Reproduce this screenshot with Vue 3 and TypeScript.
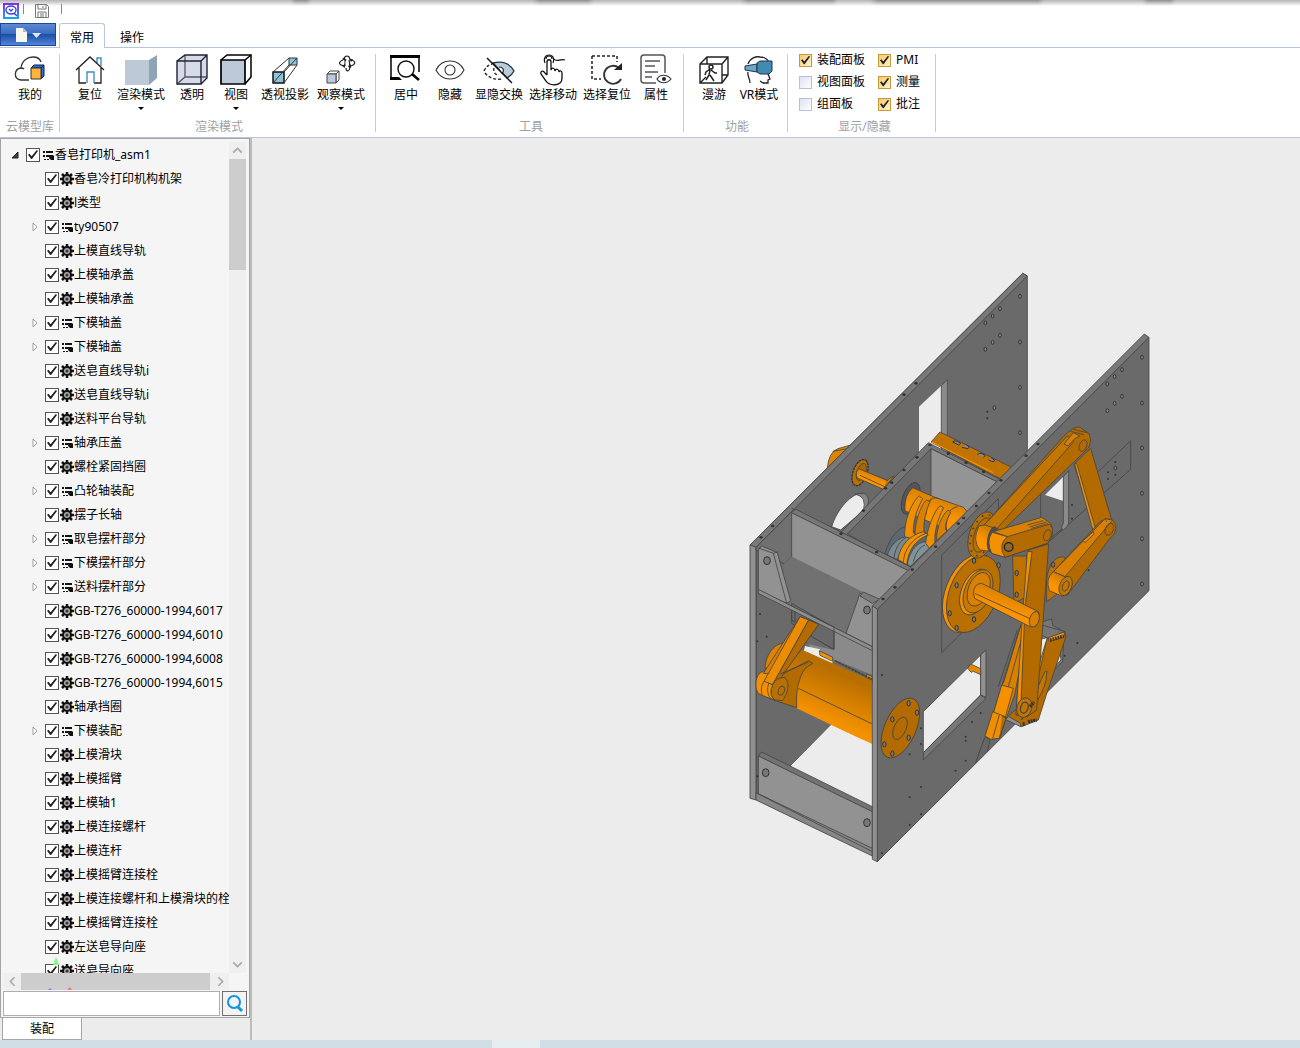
<script setup lang="ts">
import { ref } from 'vue'

interface Shape { d: string; fill?: string; stroke?: string; w?: number; dash?: string }
interface Tool { label: string; size: 'narrow' | 'medium' | 'wide' | 'vr'; menu?: boolean; shapes: Shape[] }
interface Group { caption: string; tools: Tool[] }
interface Node { name: string; branch?: boolean; checked: boolean }

const cubeBack = '#556'
const groups: Group[] = [
  {
    caption: '云模型库',
    tools: [
      { label: '我的', size: 'narrow', shapes: [
        { d: 'M15 26H7C-1 25 0 15 7 14C9 14 10 15 10 15M7 14C8 6 14 3 19 3C23 3 26 5 27 8', stroke: '#333', w: 1.3 },
        { d: 'M17 14L20 11H30L27 14ZM27 14L30 11V22L27 25Z', fill: '#2c6ce0', stroke: '#123' },
        { d: 'M17 14H27V25H17Z', fill: '#ffb43c', stroke: '#333' },
      ] },
    ],
  },
  {
    caption: '渲染模式',
    tools: [
      { label: '复位', size: 'narrow', shapes: [
        { d: 'M23 9V4H27V12', stroke: '#3d8fc6', w: 1.4 },
        { d: 'M2 16L16 3L30 16M5 14V29H12M20 29H27V14', stroke: '#222', w: 1.3 },
        { d: 'M13 29V18H20V29', stroke: '#3d8fc6', w: 1.4 },
      ] },
      { label: '渲染模式', size: 'wide', menu: true, shapes: [
        { d: 'M0 6H24V31H0Z', fill: '#bdc9d7' },
        { d: 'M24 6L32 1V24L24 31Z', fill: '#8fa5b5' },
      ] },
      { label: '透明', size: 'narrow', shapes: [
        { d: 'M1 7L9 1H31V24L25 30H1Z', fill: '#d5dce7' },
        { d: 'M1 30L9 23H31M9 23V1', stroke: cubeBack, w: 1.3 },
        { d: 'M1 7H25V30H1ZM1 7L9 1H31V24L25 30M25 7L31 1', stroke: '#223', w: 1.4 },
      ] },
      { label: '视图', size: 'narrow', menu: true, shapes: [
        { d: 'M1 6L7 1H31V23L25 30', fill: '#fff', stroke: '#000', w: 1.5 },
        { d: 'M1 6H25V30H1Z', fill: '#bdc9d9', stroke: '#000', w: 1.7 },
        { d: 'M25 6L31 1', stroke: '#000', w: 1.5 },
      ] },
      { label: '透视投影', size: 'medium', shapes: [
        { d: 'M20 4H28V11H20Z', fill: '#8cc4dc', stroke: '#333' },
        { d: 'M4 18H15V29H4Z', fill: '#8cc4dc', stroke: '#111', w: 1.5 },
        { d: 'M4 18L20 4M15 18L28 4M15 29L28 11M4 29L20 11', stroke: '#333' },
      ] },
      { label: '观察模式', size: 'wide', menu: true, shapes: [
        { d: 'M2 20L5 17H14L11 20ZM11 20L14 17V26L11 29Z', fill: '#fff', stroke: '#444' },
        { d: 'M2 20H11V29H2Z', fill: '#bcc8dc', stroke: '#444' },
        { d: 'M19 5C20 1 24 1 25 5M21 14C21 17 24 19 25 13M18 6C13 8 13 11 20 12M26 6C31 7 31 10 26 12M21 5C19 8 20 10 20 12M24 6C25 9 25 11 24 13', stroke: '#222', w: 1.2 },
        { d: 'M17 5L20 3V7ZM24 5H28L26 8ZM20 10V14L17 12ZM23 13L26 10V14Z', fill: '#222' },
      ] },
    ],
  },
  {
    caption: '工具',
    tools: [
      { label: '居中', size: 'narrow', shapes: [
        { d: 'M1 3V25M29 3V18', stroke: '#000', w: 1.5 },
        { d: 'M0 1H30V4H0ZM0 23H9L12 26H0Z', fill: '#000' },
        { d: 'M24 15A8 8 0 1 1 8 15A8 8 0 1 1 24 15', stroke: '#111', w: 1.4 },
        { d: 'M22 20L29 26', stroke: '#000', w: 2.6 },
      ] },
      { label: '隐藏', size: 'narrow', shapes: [
        { d: 'M2 16C8 4 24 4 30 16C24 28 8 28 2 16Z', stroke: '#333', w: 1.1 },
        { d: 'M21 16A5 5 0 1 1 11 16A5 5 0 1 1 21 16', stroke: '#333', w: 1.1 },
      ] },
      { label: '显隐交换', size: 'medium', shapes: [
        { d: 'M10 9C18 7 26 8 31 17C29 21 27 22 24 24Z', fill: '#bccbdc', stroke: '#234', w: 1.3 },
        { d: 'M16 13C20 13 22 16 19 20', fill: '#fff', stroke: '#234', w: 1.2 },
        { d: 'M1 17C3 13 5 11 9 10M2 19C6 24 12 26 19 25M11 14C10 18 12 21 16 21', stroke: '#222', w: 1.3, dash: '3 2' },
        { d: 'M4 4L29 29', stroke: '#111', w: 1.5 },
      ] },
      { label: '选择移动', size: 'medium', shapes: [
        { d: 'M10 21V8C10 5 14 5 14 8V16C15 13 18 14 18 17C19 14 22 15 22 18C23 16 25 17 25 19V24C25 33 12 32 9 27L4 20C3 17 6 16 8 19L10 21', fill: '#fff', stroke: '#111', w: 1.3 },
        { d: 'M8 9C6 4 9 1 12 1C16 1 18 5 16 9M17 5C20 9 23 4 28 6', stroke: '#111', w: 1.2 },
        { d: 'M9 5A3 3 0 1 1 15 5', stroke: '#111', w: 1.2 },
      ] },
      { label: '选择复位', size: 'medium', shapes: [
        { d: 'M1 2H26V8M1 2V25H10', stroke: '#222', w: 1.5, dash: '3 2' },
        { d: 'M28 14A9 9 0 1 0 30 25', stroke: '#333', w: 1.8 },
        { d: 'M31 9V16H23Z', fill: '#222' },
      ] },
      { label: '属性', size: 'narrow', shapes: [
        { d: 'M16 29H4Q1 29 1 26V4Q1 1 4 1H22Q25 1 25 4V19', stroke: '#555', w: 1.5 },
        { d: 'M5 7H20M5 12H15M5 18H18M5 23H12', stroke: '#555', w: 1.4 },
        { d: 'M17 25C20 20 27 20 31 25C27 30 20 30 17 25Z', fill: '#fff', stroke: '#333', w: 1.2 },
        { d: 'M26 25A2 2 0 1 1 22 25A2 2 0 1 1 26 25', fill: '#222' },
      ] },
    ],
  },
  {
    caption: '功能',
    tools: [
      { label: '漫游', size: 'narrow', shapes: [
        { d: 'M2 10L9 3H30V21L24 29H2ZM2 10H24V29M24 10L30 3M9 3V10M24 21H30M2 29L8 23', stroke: '#222', w: 1.4 },
        { d: 'M15 13A2 2 0 1 1 11 13A2 2 0 1 1 15 13M12 15L8 18L7 21M13 16L17 19L19 19M12 16L11 21L8 26M12 21L16 27', stroke: '#222', w: 1.5 },
      ] },
      { label: 'VR模式', size: 'vr', shapes: [
        { d: 'M5 10C7 4 13 2 17 3C22 3 25 6 26 9M5 18C4 22 7 24 7 29M25 20L27 25L25 26V29L20 29L17 27', stroke: '#222', w: 1.3 },
        { d: 'M2 12L14 10V18L2 16Z', fill: '#6aa7c8', stroke: '#234' },
        { d: 'M14 9L17 7H29V17L26 20H17L14 18Z', fill: '#418bb3', stroke: '#234' },
      ] },
    ],
  },
]

const toggles = ref([
  { label: '装配面板', on: true }, { label: 'PMI', on: true },
  { label: '视图面板', on: false }, { label: '测量', on: true },
  { label: '组面板', on: false }, { label: '批注', on: true },
])

const branches = new Set([2, 6, 7, 11, 13, 15, 16, 17, 23])
const names = [
  '香皂冷打印机构机架', 'l类型', 'ty90507', '上模直线导轨', '上模轴承盖', '上模轴承盖', '下模轴盖', '下模轴盖',
  '送皂直线导轨i', '送皂直线导轨i', '送料平台导轨', '轴承压盖', '螺栓紧固挡圈', '凸轮轴装配', '摆子长轴',
  '取皂摆杆部分', '下模摆杆部分', '送料摆杆部分', 'GB-T276_60000-1994,6017', 'GB-T276_60000-1994,6010',
  'GB-T276_60000-1994,6008', 'GB-T276_60000-1994,6015', '轴承挡圈', '下模装配', '上模滑块', '上模摇臂',
  '上模轴1', '上模连接螺杆', '上模连杆', '上模摇臂连接栓', '上模连接螺杆和上模滑块的栓', '上模摇臂连接栓',
  '左送皂导向座', '送皂导向座',
]
const rootNode = ref<Node>({ name: '香皂打印机_asm1', branch: true, checked: true })
const nodes = ref<Node[]>(names.map((name, i) => ({ name, branch: branches.has(i), checked: true })))
const query = ref('')

// Bolt holes on the plates: x, y in drawing units.
const plateHoles = [
  [840, 109], [780, 146], [758, 168], [736, 189], [780, 226], [758, 247], [736, 268], [840, 246], [840, 382], [840, 518], [763, 443],
  [1206, 292], [1146, 329], [1124, 350], [1102, 372], [1146, 409], [1124, 430], [1102, 452], [1206, 429], [1206, 564], [1206, 700],
  [1206, 836], [1206, 972], [1126, 624],
]
const smallHoles = [
  [742, 455], [742, 475], [1104, 637], [1104, 657], [1126, 606], [1126, 644], [996, 735], [996, 776], [1046, 931], [1012, 1149], [974, 1187],
  [722, 1359], [696, 1386], [677, 1430], [677, 1442], [677, 1502], [647, 1532], [543, 1405], [543, 1452], [509, 1483], [543, 1581],
  [509, 1612], [543, 1663], [509, 1694], [426, 1780], [426, 1245], [60, 1062], [80, 1130], [52, 1144], [52, 1549],
]
const edgeHoles = [
  [528, 370], [492, 404], [98, 798], [63, 832], [894, 552], [858, 587], [783, 661], [747, 699], [709, 738], [671, 774],
  [655, 791], [587, 860], [517, 929], [465, 982], [429, 1017], [570, 555], [531, 592], [492, 630], [455, 668], [437, 685],
  [370, 752], [303, 821], [410, 876], [625, 581], [678, 608], [731, 635],
]
const bolts = [
  [506, 1330], [531, 1358], [457, 1378], [433, 1453], [506, 1433], [457, 1481], [702, 902], [776, 916], [650, 976],
  [629, 1060], [650, 1104], [702, 1078], [830, 939], [830, 1004], [939, 914],
]
</script>

<template>
  <div class="app">
    <header class="titlebar">
      <svg class="logo" viewBox="0 0 16 16" aria-hidden="true">
        <defs>
          <linearGradient id="logo-edge" x1="0" y1="0" x2="0" y2="1">
            <stop offset="0" stop-color="#8a2be8" /><stop offset="1" stop-color="#12a5ff" />
          </linearGradient>
        </defs>
        <rect x="1" y="1" width="14" height="14" fill="#fff" stroke="url(#logo-edge)" stroke-width="2" />
        <path d="M3 7A5 4 0 0 1 13 7A5 4 0 0 1 3 7M11 10L14 13M6 6L8 8L10 6" fill="none" stroke="#3346e0" stroke-width="1.4" />
      </svg>
      <span class="tick"></span>
      <button class="save" aria-label="保存">
        <svg viewBox="0 0 14 14"><path d="M.5 .5H11.500L13.500 2.500V13.500H.5ZM3 .5V5H11V.5M3 13V8H11V13M5 10H9M5 12H9M8 2V4" fill="none" stroke="#777" /></svg>
      </button>
      <span class="tick"></span>
    </header>

    <nav class="tabs">
      <button class="file" aria-label="文件">
        <svg viewBox="0 0 28 14"><path d="M2 0H9L13 4V14H2Z" fill="#f6f6f2" /><path d="M9 0V4H13" fill="#bbb" /><path d="M18 5H27L22.500 10Z" fill="#dbe8ff" /></svg>
      </button>
      <button class="tab active">常用</button>
      <button class="tab">操作</button>
    </nav>

    <section class="ribbon">
      <div v-for="g in groups" :key="g.caption" class="group">
        <div class="tools">
          <button v-for="t in g.tools" :key="t.label" class="tool" :class="t.size">
            <svg class="icon" viewBox="0 0 32 32">
              <path v-for="(s, i) in t.shapes" :key="i" :d="s.d" :fill="s.fill ?? 'none'" :stroke="s.stroke ?? 'none'" :stroke-width="s.w ?? 1" :stroke-dasharray="s.dash" />
            </svg>
            <span>{{ t.label }}</span>
            <i v-if="t.menu" class="caret"></i>
          </button>
        </div>
        <div class="caption">{{ g.caption }}</div>
      </div>
      <div class="group show">
        <div class="toggles">
          <label v-for="t in toggles" :key="t.label"><input v-model="t.on" type="checkbox" />{{ t.label }}</label>
        </div>
        <div class="caption">显示/隐藏</div>
      </div>
    </section>

    <main class="work">
      <aside class="dock">
        <div class="panel">
          <div class="browser">
            <ul class="tree">
              <li class="row root">
                <svg class="arrow" viewBox="0 0 8 8"><path d="M7 1V7H1Z" fill="#404040" stroke="#222" /></svg>
                <label><input v-model="rootNode.checked" type="checkbox" />
                  <svg class="list" viewBox="0 0 12 12"><path d="M0 1H2V3H0ZM3 1H10V3H3ZM0 5H2V7H0ZM3 5H7V7H3ZM1 9H3V10H1ZM4 9H6V10H4ZM7 5H10L11 6V10H8L6 8Z" fill="#111" /></svg>{{ rootNode.name }}</label>
              </li>
              <li v-for="(n, i) in nodes" :key="i" class="row">
                <svg class="arrow" viewBox="0 0 8 8"><path v-if="n.branch" d="M2 0L6 4L2 8Z" fill="#fff" stroke="#a0a0a0" /></svg>
                <label><input v-model="n.checked" type="checkbox" />
                  <svg v-if="n.branch" class="list" viewBox="0 0 12 12"><path d="M0 1H2V3H0ZM3 1H10V3H3ZM0 5H2V7H0ZM3 5H7V7H3ZM1 9H3V10H1ZM4 9H6V10H4ZM7 5H10L11 6V10H8L6 8Z" fill="#111" /></svg>
                  <svg v-else class="gear" viewBox="0 0 14 14">
                    <path d="M7 0V14M0 7H14M2 2L12 12M12 2L2 12" stroke="#111" stroke-width="2.500" />
                    <circle cx="7" cy="7" r="4" fill="#aaa" stroke="#111" stroke-width="2" /><circle cx="7" cy="7" r="1.500" fill="#333" />
                  </svg>{{ n.name }}</label>
              </li>
            </ul>
            <div class="vbar">
              <svg viewBox="0 0 16 16"><path d="M4 10L8 6L12 10" /></svg>
              <div class="vthumb"></div>
              <svg viewBox="0 0 16 16"><path d="M4 6L8 10L12 6" /></svg>
            </div>
            <div class="hbar">
              <svg viewBox="0 0 16 16"><path d="M10 4L6 8L10 12" /></svg>
              <div class="hthumb"></div>
              <svg viewBox="0 0 16 16"><path d="M6 4L10 8L6 12" /></svg>
            </div>
            <svg class="triad" viewBox="0 0 30 36" aria-hidden="true">
              <path d="M9 8L12 0L15 8Z" fill="#7dfa7d" /><path d="M4 33L6 31L8 33Z" fill="#8080ff" /><path d="M23 33L26 30L28 33Z" fill="#ff7878" />
            </svg>
          </div>
          <form class="search" @submit.prevent>
            <input v-model="query" type="text" aria-label="搜索" />
            <button aria-label="查找"><svg viewBox="0 0 18 18"><circle cx="8" cy="7" r="6" fill="none" stroke="#1296db" stroke-width="2" /><path d="M12 12L16 16" stroke="#1296db" stroke-width="3" /></svg></button>
          </form>
        </div>
        <div class="docktabs"><button>装配</button></div>
      </aside>

      <div class="viewport">
        <svg class="model" viewBox="252 138 1048 902" role="img" aria-label="香皂打印机">
          <defs>
            <linearGradient id="drum" x1="0" y1="0" x2="-0.4" y2="1">
              <stop offset="0" stop-color="#b96f00" /><stop offset=".45" stop-color="#f39100" /><stop offset="1" stop-color="#ff9800" />
            </linearGradient>
            <linearGradient id="rod" x1="0" y1="1" x2=".5" y2="0">
              <stop offset="0" stop-color="#ff9800" /><stop offset=".5" stop-color="#fb9400" /><stop offset="1" stop-color="#c87800" />
            </linearGradient>
          </defs>
          <g transform="translate(740 260) scale(.33333)" stroke="#454545" stroke-width="2.500" stroke-linejoin="round">
            <!-- rear side plate -->
            <path d="M262 625Q266 576 294 566L332 555L340 590L270 650Z" fill="#df8400" />
            <path d="M278 574L322 566" />
            <path d="M30 855L848 40L862 48V806L48 1620V862Z" fill="#6a6a6a" />
            <path d="M30 855L848 40L862 48L48 862Z" fill="#787878" />
            <path d="M30 855L48 862V1620L30 1615Z" fill="#909090" />
            <path d="M537 440L622 360V580H537Z" fill="#ececec" stroke="none" />
            <path d="M604 377L622 360V580H604Z" fill="#8b8b8b" />
            <path d="M275 800C290 750 335 695 372 700C390 712 386 735 370 752L302 810Z" fill="#ececec" />
            <path d="M345 702Q382 710 370 752C390 735 390 706 372 700Z" fill="#858585" />
            <!-- short shaft and flange -->
            <ellipse cx="360" cy="638" rx="21" ry="41" transform="rotate(20 360 638)" fill="#b87000" stroke="#333" stroke-width="4" stroke-dasharray="8 2" />
            <ellipse cx="364" cy="636" rx="13" ry="27" transform="rotate(20 364 636)" fill="#a96500" />
            <path d="M356 626L444 662L430 688L352 654Q344 638 356 626Z" fill="url(#rod)" />
            <path d="M360 646L434 680M440 664Q450 650 462 648L430 688" fill="#c87800" />
            <!-- middle compartment -->
            <g transform="translate(240 480)">
              <path d="M333 66L360 36L575 142L545 178L520 166Z" fill="#c17300" />
              <path d="M335 66L520 158" fill="none" stroke="#ff9800" stroke-width="3" />
              <path d="M398 66Q404 60 412 64L422 70L416 75ZM426 82L444 86L448 80L438 74M472 104Q478 98 486 101L496 107L490 112M506 120L520 126L524 120L514 114" fill="#8a8a8a" stroke="#333" stroke-width="3" />
              <path d="M60 340L325 68L543 180L270 450Z" fill="#767676" />
              <path d="M82 342L333 86L530 185L265 445Z" fill="#696969" />
              <path d="M333 86L530 185L435 285L333 230Z" fill="#949494" />
              <!-- camshaft -->
              <ellipse cx="272" cy="235" rx="24" ry="50" transform="rotate(20 272 235)" fill="#555" stroke="#333" stroke-dasharray="5 2" />
              <path d="M278 203L345 232L430 262L442 275L385 332L255 272Q252 225 278 203Z" fill="url(#rod)" />
              <path d="M325 245Q335 228 358 236M318 285Q318 252 335 238M384 285Q390 265 412 260M380 332Q375 300 390 280" fill="none" />
              <path d="M195 400C210 350 235 325 255 320L345 362L265 440Z" fill="#5b6a70" />
              <path d="M202 405C215 365 245 345 275 350L240 410L228 418Z" fill="#78898f" />
              <path d="M262 432C270 385 300 360 328 365L335 378L270 440Z" fill="#819399" />
              <path d="M222 414C225 380 245 358 262 350M280 425C288 395 300 380 315 375" fill="none" />
              <path d="M254 335C256 290 280 240 298 228L308 236C290 270 280 300 280 338L294 345L288 360L254 350Z" fill="#ee8e00" />
              <path d="M285 345C285 300 305 250 320 240L330 245C315 280 310 310 312 338L290 360Z" fill="#d98000" />
              <path d="M317 370C322 320 345 270 360 257L371 263C352 300 342 340 345 368L328 384Z" fill="#ee8e00" />
              <path d="M350 362C348 320 370 280 384 270L392 276C375 310 372 330 382 332Z" fill="#d98000" />
              <path d="M234 418C240 375 270 345 310 335L325 345C285 360 265 390 260 435Z" fill="#f39100" />
              <path d="M250 427C252 390 275 355 318 340" fill="none" />
            </g>
            <!-- front box -->
            <path d="M48 862L153 757L168 752L520 925L412 1045L395 1038L48 870Z" fill="#707070" />
            <path d="M155 760L505 932L415 1020L155 890Z" fill="#929292" stroke="none" />
            <path d="M155 760V890L130 915M155 745L520 925" fill="none" />
            <path d="M153 757L168 748L520 925L505 932Z" fill="#777" />
            <g transform="translate(0 840)">
              <path d="M155 50L410 176L360 162L318 280L140 190L128 75Z" fill="#717171" stroke="none" />
              <path d="M155 190V250L282 330V262Z" fill="#696969" />
              <path d="M205 312L280 330V262L397 320V405L280 358L215 330Z" fill="#8a8a8a" stroke="none" />
              <path d="M212 225L282 262V328L215 290Z" fill="#686868" />
              <path d="M55 30L65 18L112 38L152 182L140 190L55 152Z" fill="#929292" />
              <path d="M55 24L100 40L140 190M100 40L112 36" fill="none" />
              <path d="M360 160L412 182L397 320L318 280Z" fill="#929292" />
              <path d="M360 168L370 156L420 178L397 190Z" fill="#7b7b7b" />
              <path d="M55 148L397 320V332L55 160Z" fill="#8e8e8e" />
              <path d="M155 210V240L165 246V215M282 262V328" fill="none" />
              <!-- drum and crank -->
              <path d="M195 318L240 328V345L280 360L275 375L190 340Z" fill="#ececec" stroke="none" />
              <path d="M238 332L278 352V364L240 346ZM380 402L397 410V420L380 414Z" fill="#f29100" />
              <path d="M285 362L380 410L397 418" stroke="#444" stroke-width="5" fill="none" stroke-dasharray="9 2" />
              <path d="M75 385C78 335 110 310 130 310L150 380Z" fill="#df8400" />
              <path d="M188 330L397 422V614L170 505L120 470L120 390Z" fill="url(#drum)" stroke="none" />
              <path d="M175 445L397 552" fill="none" />
              <path d="M105 415L205 362L218 370L195 385Q165 430 170 503L100 480Z" fill="#b36b00" />
              <path d="M72 393Q45 400 48 440Q50 460 62 464L100 480L130 420Z" fill="#f39100" />
              <path d="M180 230L236 253L125 405L70 400Z" fill="#d98000" />
              <path d="M180 230L206 240L98 434L72 424Z" fill="#ec8c00" />
              <path d="M206 240L236 253L125 410L98 434Z" fill="#b36b00" />
              <path d="M98 434Q108 412 135 412Q150 430 140 460L128 482L105 480Q84 466 98 434Z" fill="#b87000" />
              <path d="M98 434Q84 466 105 480L90 474Q78 455 86 430Z" fill="#f39100" />
              <ellipse cx="124" cy="452" rx="9" ry="14" transform="rotate(18 124 452)" fill="none" />
              <path d="M72 424Q60 440 66 465M120 402L206 366" fill="none" />
              <!-- lower opening -->
              <path d="M272 556L152 678L397 800V612Z" fill="#ececec" stroke="none" />
              <path d="M55 648L65 636L397 800V820Z" fill="#737373" />
              <path d="M55 648L397 815V935L55 765Z" fill="#929292" />
              <path d="M48 758L397 925V948L48 780Z" fill="#868686" />
              <path d="M55 762L397 935" fill="none" />
            </g>
            <g fill="#777" stroke="#333" stroke-width="3">
              <ellipse cx="81" cy="902" rx="10" ry="12" /><ellipse cx="381" cy="1050" rx="10" ry="12" />
              <ellipse cx="77" cy="1538" rx="10" ry="12" /><ellipse cx="381" cy="1688" rx="10" ry="12" />
            </g>
            <!-- front side plate -->
            <path d="M412 1045L1227 232V992L412 1805Z" fill="#6a6a6a" />
            <path d="M397 1038L1213 222L1227 232L412 1048Z" fill="#787878" />
            <path d="M397 1038L412 1047V1805L397 1798Z" fill="#909090" />
            <path d="M550 1355L722 1185V1305L550 1478Z" fill="#ececec" />
            <path d="M722 1185L738 1170V1312L722 1305Z" fill="#919191" />
            <path d="M550 1478L722 1305L738 1315L550 1500Z" fill="#777" />
            <path d="M683 1225L692 1212L722 1226V1244L700 1234L694 1237Z" fill="#e58900" />
            <path d="M605 1178V885L775 716V870M605 1178L720 1065M820 940L1172 628V542L1075 635M902 700V770M902 860L980 795" fill="none" />
            <path d="M915 705L970 650V723Z" fill="#ececec" stroke="none" />
            <path d="M970 650L986 632V790Q984 802 967 812L965 800L970 790Z" fill="#8a8a8a" />
            <path d="M706 1510L735 1430L750 1440L742 1474" fill="#666" />
            <path d="M898 1088L935 1077L938 1096L972 1115L968 1205L912 1260Z" fill="#777" />
            <path d="M896 1140L955 1130L963 1200L920 1246L885 1225Z" fill="#ececec" />
            <!-- large bearing flange -->
            <ellipse cx="690" cy="1000" rx="74" ry="124" transform="rotate(22 690 1000)" fill="#f39100" />
            <ellipse cx="700" cy="1002" rx="72" ry="121" transform="rotate(22 700 1002)" fill="#ba7000" />
            <ellipse cx="706" cy="996" rx="42" ry="72" transform="rotate(22 706 996)" fill="#f39100" />
            <ellipse cx="714" cy="994" rx="40" ry="68" transform="rotate(22 714 994)" fill="#c87800" />
            <ellipse cx="716" cy="988" rx="31" ry="53" transform="rotate(22 716 988)" fill="#d98000" />
            <!-- upper linkage -->
            <g transform="translate(570 480)">
              <ellipse cx="156" cy="345" rx="38" ry="72" transform="rotate(18 156 345)" fill="#b87000" />
              <ellipse cx="156" cy="345" rx="31" ry="64" transform="rotate(18 156 345)" fill="none" stroke="#3c3c3c" stroke-width="5" stroke-dasharray="5 18" />
              <ellipse cx="158" cy="345" rx="25" ry="54" transform="rotate(18 158 345)" fill="none" />
              <path d="M248 408H290V530L252 550Z" fill="#bd7200" />
              <path d="M350 480C355 430 380 405 405 412L410 500L350 545Z" fill="#bd7200" />
              <path d="M432 132L492 325L510 335L545 300L482 85Z" fill="#b36b00" />
              <path d="M434 132L440 130L496 325L490 335Z" fill="#f39100" />
              <path d="M160 318L400 50Q435 15 450 22L478 42Q486 65 475 84L225 325L190 340Z" fill="#b36b00" />
              <path d="M160 318L412 48L432 64L190 338Z" fill="#c57600" />
              <path d="M402 72L430 38L450 48L434 56L414 78ZM422 34L462 44M430 28L472 38" fill="#d98000" />
              <path d="M147 318L165 315L212 330L190 395L150 390Q125 360 147 318Z" fill="url(#rod)" />
              <ellipse cx="188" cy="358" rx="15" ry="38" transform="rotate(10 188 358)" fill="#4d4d4d" />
              <path d="M190 335L335 292L362 310Q378 340 352 370L225 412L185 400Q168 365 190 335Z" fill="#d98000" />
              <path d="M190 335L232 350L360 312Q380 340 352 370L225 412Q198 395 225 350" fill="#b36b00" />
              <path d="M186 337L232 350Q202 375 225 412L185 400Q168 365 186 337Z" fill="#f39100" />
              <path d="M292 315L340 302M298 321L350 306M304 325L355 310" fill="none" />
              <circle cx="236" cy="381" r="13" fill="#8e6430" stroke="#222" stroke-width="4" />
              <ellipse cx="352" cy="346" rx="11" ry="17" transform="rotate(20 352 346)" fill="none" />
              <ellipse cx="459" cy="77" rx="11" ry="18" transform="rotate(22 459 77)" fill="none" />
              <path d="M370 455L510 305Q545 285 558 315Q560 340 540 355L410 528L370 500Z" fill="#b36b00" />
              <path d="M370 455L525 296L548 300L405 470Z" fill="#d98000" />
              <path d="M460 362L490 335L492 342L465 368ZM525 296L530 305" fill="#f39100" />
              <ellipse cx="538" cy="328" rx="12" ry="19" transform="rotate(22 538 328)" fill="none" />
              <path d="M370 455L415 475L400 530L358 512Q345 475 370 455Z" fill="url(#rod)" />
              <ellipse cx="407" cy="498" rx="18" ry="30" transform="rotate(22 407 498)" fill="#c27500" />
              <ellipse cx="407" cy="498" rx="9" ry="16" transform="rotate(22 407 498)" fill="none" />
            </g>
            <!-- lower linkage -->
            <g transform="translate(570 930)">
              <path d="M272 165L295 158L255 370L210 500L165 498L190 430Z" fill="#d98000" />
              <path d="M272 168L220 340M282 180L235 350M262 180L205 350" fill="none" />
              <path d="M190 430L215 345L250 355L225 445Z" fill="#f39100" />
              <path d="M188 425L226 440L208 505L182 508L165 498Z" fill="#ee8e00" />
              <path d="M208 435L188 506M216 438L228 444L208 506" fill="#b36b00" />
              <path d="M345 205L405 185L408 200L352 365L325 450L275 470L228 445L300 380Z" fill="#b36b00" />
              <path d="M352 202L275 450L330 300ZM354 200L405 185L402 200L358 215Z" fill="#f39100" />
              <path d="M360 210L402 198" stroke="#333" stroke-width="10" stroke-dasharray="5 3" />
              <path d="M328 210L350 205L312 325Z" fill="#ececec" stroke="none" />
              <path d="M328 192L340 166L405 185L352 204Z" fill="#767676" />
              <path d="M350 310Q354 300 344 306L320 360Q315 400 298 410L322 392Q350 345 350 310" fill="#c57600" />
              <path d="M296 -60L356 -78L320 420L292 440L258 435L278 160L288 80Z" fill="#b36b00" />
              <path d="M292 -55L306 -55L285 110L272 425L258 435L276 160Z" fill="#f39100" />
              <ellipse cx="283" cy="413" rx="22" ry="30" transform="rotate(18 283 413)" fill="#c27500" />
              <ellipse cx="283" cy="413" rx="11" ry="17" transform="rotate(18 283 413)" fill="none" stroke-width="4" />
              <path d="M226 448L236 440L272 460V470Z" fill="#909090" />
              <path d="M278 462H284M294 455L320 450M300 410L312 396" stroke="#333" stroke-width="10" stroke-dasharray="6 2" />
              <!-- drive rod -->
              <path d="M130 70Q132 40 155 40L325 125Q332 145 318 168L300 170L134 85Z" fill="url(#rod)" />
              <path d="M134 70L300 146" fill="none" />
              <ellipse cx="313" cy="148" rx="14" ry="24" transform="rotate(18 313 148)" fill="#d98000" />
            </g>
            <!-- small bearing cap -->
            <ellipse cx="481" cy="1404" rx="47" ry="96" transform="rotate(24 481 1404)" fill="#b36b00" />
            <ellipse cx="480" cy="1405" rx="18" ry="36" transform="rotate(24 480 1405)" fill="none" />
            <g fill="#777" stroke="#333" stroke-width="3">
              <ellipse v-for="([x, y], i) in bolts" :key="i" :cx="x" :cy="y" rx="5" ry="8" />
            </g>
            <g fill="#888" stroke="#333" stroke-width="3">
              <ellipse v-for="([x, y], i) in plateHoles" :key="i" :cx="x" :cy="y" rx="4" ry="6" />
            </g>
            <g fill="#333" stroke="none">
              <circle v-for="([x, y], i) in smallHoles" :key="i" :cx="x" :cy="y" r="3" />
              <ellipse v-for="([x, y], i) in edgeHoles" :key="i" :cx="x" :cy="y" rx="5" ry="4" />
            </g>
          </g>
        </svg>
      </div>
    </main>
    <footer class="strip"><span></span></footer>
  </div>
</template>

<style>
body { margin: 0; overflow: hidden; }
</style>

<style scoped>
* { box-sizing: border-box; }
.app {
  height: 100vh;
  display: flex;
  flex-direction: column;
  background: #fff;
  color: #000;
  font: 12px/16px "Noto Sans", "Noto Sans CJK SC", sans-serif;
}
button { font: inherit; color: inherit; border: 0; background: none; padding: 0; }
.titlebar {
  height: 22px;
  flex: none;
  display: flex;
  align-items: flex-start;
  padding: 3px 3px 0;
  background:
    linear-gradient(#0000, #fff 6px),
    linear-gradient(90deg, #b4b4b4 290px, #8c8c8c 296px 306px, #b4b4b4 312px 532px, #8c8c8c 540px 588px, #b4b4b4 594px 740px, #8c8c8c 748px 832px, #b4b4b4 838px 870px, #8c8c8c 878px 1038px, #b4b4b4 1044px 1142px, #8c8c8c 1148px 1170px, #b4b4b4 1176px);
}
.logo { width: 16px; height: 16px; }
.tick { width: 1px; height: 10px; background: #888; margin: 1px 11px 0 4px; }
.save { width: 14px; height: 14px; margin-top: 1px; }
.save svg { display: block; width: 14px; height: 14px; }
.save + .tick { margin-left: 12px; }
.tabs { height: 25px; flex: none; display: flex; align-items: flex-end; }
.file {
  width: 56px;
  height: 23px;
  margin: 0 3px 1px 0;
  border: 1px solid #1c479b;
  background: linear-gradient(#5d8ad2, #3b6dc0 45%, #1c4fa8 50%, #4f86d6);
}
.file svg { width: 28px; height: 14px; display: block; margin: 0 auto; }
.tab { height: 24px; padding: 4px 10px 0; border: 1px solid transparent; border-bottom: 0; }
.tab.active {
  height: 25px;
  margin: 0 4px -1px 0;
  border-color: #b9c5da;
  border-radius: 3px 3px 0 0;
  background: #fff;
  position: relative;
  z-index: 1;
}
.ribbon {
  height: 91px;
  flex: none;
  display: flex;
  border-top: 1px solid #b9c5da;
  border-bottom: 1px solid #b9c5da;
  padding: 6px 0;
}
.group {
  min-width: 60px;
  height: 78px;
  display: flex;
  flex-direction: column;
  justify-content: space-between;
  align-items: center;
  padding: 0 5px 0 8px;
  border-right: 1px solid #c3cddd;
}
.group:first-child { padding-left: 6px; }
.tools { display: flex; align-items: flex-start; }
.tool { display: flex; flex-direction: column; align-items: center; white-space: nowrap; }
.tool.narrow { width: 44px; }
.tool.medium { width: 54px; }
.tool.wide { width: 58px; }
.tool.vr { width: 46px; }
.icon { width: 32px; height: 32px; margin-bottom: 1px; }
.caret { border: 3px solid transparent; border-top-color: #000; border-bottom: 0; margin-top: 4px; }
.caption { color: #a0a0a0; line-height: 16px; margin-bottom: -3px; white-space: nowrap; }
.show { width: 148px; padding: 0 5px 0 11px; }
.toggles { align-self: stretch; display: grid; grid-template-columns: 79px auto; margin-top: -5px; }
.toggles label { display: flex; align-items: center; gap: 5px; height: 22px; }
.toggles input, .row input {
  appearance: none;
  position: relative;
  flex: none;
  width: 13px;
  height: 13px;
  margin: 0;
  border: 1px solid #b5bfe0;
  background: linear-gradient(135deg, #dfe2ef, #fff);
}
.toggles input:checked { border-color: #c29b3a; background: linear-gradient(135deg, #fbc868, #fff2d0); }
.toggles input:checked::after, .row input:checked::after {
  content: "";
  position: absolute;
  inset: 1px;
  background: #222;
  clip-path: polygon(0 52%, 15% 42%, 36% 68%, 88% 4%, 100% 14%, 40% 96%, 32% 96%);
}
.work { flex: 1; min-height: 0; display: flex; background: #ececec; }
.dock { width: 252px; flex: none; display: flex; flex-direction: column; border-right: 2px solid #bcbcbc; }
.panel {
  flex: 1;
  min-height: 0;
  display: flex;
  flex-direction: column;
  border: 1px solid #a5a5a5;
  background: #f5f5f5;
  padding: 3px 2px 1px;
}
.browser {
  position: relative;
  flex: 1;
  min-height: 0;
  display: grid;
  grid-template: minmax(0, 1fr) 17px / 226px 17px;
  margin-bottom: 1px;
}
.tree { list-style: none; margin: 0; padding: 1px 0 0; overflow: hidden; }
.row { height: 24px; display: flex; align-items: center; padding-left: 28px; white-space: nowrap; }
.row.root { padding-left: 8px; }
.row label { display: flex; align-items: center; }
.arrow { width: 8px; height: 8px; margin-right: 6px; flex: none; }
.root .arrow { margin-right: 7px; }
.row input { width: 14px; height: 14px; border-color: #555; background: #fff; margin: 0 1px 1px 0; }
.gear { width: 14px; height: 14px; flex: none; }
.list { width: 12px; height: 12px; margin: 2px 0 0 2px; flex: none; }
.vbar, .hbar { display: flex; background: #efefef; }
.vbar { flex-direction: column; }
.hbar { padding-left: 1px; }
.vbar svg, .hbar svg { width: 17px; height: 17px; flex: none; fill: none; stroke: #aaa; stroke-width: 1.6; }
.vthumb { height: 111px; margin-bottom: auto; background: #cdcdcd; }
.hthumb { flex: 1; background: #cdcdcd; margin-right: 2px; }
.triad { position: absolute; left: 41px; bottom: -3px; width: 30px; height: 36px; }
.search { display: flex; gap: 2px; height: 25px; flex: none; }
.search input { flex: 1; min-width: 0; border: 1px solid #abadb3; background: #fff; font: inherit; }
.search button { width: 25px; border: 1px solid #707070; background: #f3f3f3; }
.search svg { width: 18px; height: 18px; display: block; margin: 0 auto; }
.docktabs { height: 22px; flex: none; padding-left: 2px; }
.docktabs button { display: block; width: 80px; height: 22px; padding-top: 1px; border: 1px solid #a5a5a5; border-top: 0; background: #fff; }
.viewport { flex: 1; min-width: 0; }
.model { display: block; width: 100%; height: 100%; }
.strip { height: 8px; flex: none; background: #cfdfe5; padding-left: 492px; }
.strip span { display: block; width: 48px; height: 8px; background: #e6eef2; }
</style>
